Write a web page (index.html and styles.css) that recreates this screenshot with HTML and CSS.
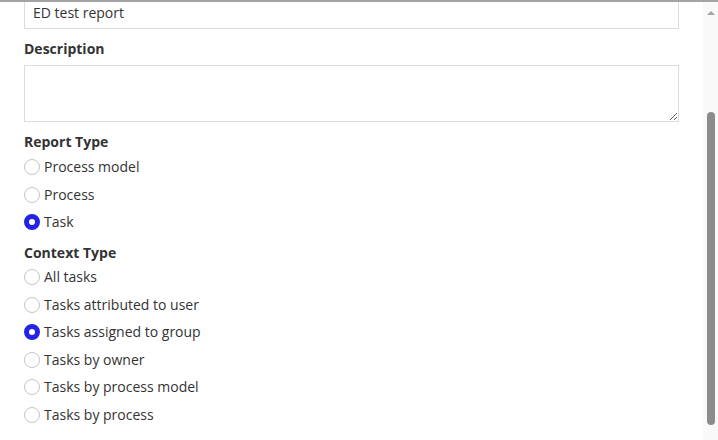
FILE: index.html
```html
<!DOCTYPE html>
<html lang="en">
<head>
<meta charset="utf-8">
<title>Report settings</title>
<link rel="stylesheet" href="styles.css">
</head>
<body>
<div class="frame">
  <div class="pane">
    <form class="form">
      <input class="text-input" type="text" value="ED test report">

      <label class="field-label">Description</label>
      <textarea class="text-area"></textarea>

      <div class="field-label gap-top">Report Type</div>
      <div class="radio-group">
        <label class="radio-row"><input type="radio" name="report"><span>Process model</span></label>
        <label class="radio-row"><input type="radio" name="report"><span>Process</span></label>
        <label class="radio-row"><input type="radio" name="report" checked><span>Task</span></label>
      </div>

      <div class="field-label gap-top-lg">Context Type</div>
      <div class="radio-group">
        <label class="radio-row"><input type="radio" name="context"><span>All tasks</span></label>
        <label class="radio-row"><input type="radio" name="context"><span>Tasks attributed to user</span></label>
        <label class="radio-row"><input type="radio" name="context" checked><span>Tasks assigned to group</span></label>
        <label class="radio-row"><input type="radio" name="context"><span>Tasks by owner</span></label>
        <label class="radio-row"><input type="radio" name="context"><span>Tasks by process model</span></label>
        <label class="radio-row"><input type="radio" name="context"><span>Tasks by process</span></label>
      </div>
    </form>
  </div>
  <div class="scrollbar">
    <div class="scroll-arrow"></div>
    <div class="scroll-thumb"></div>
  </div>
</div>
</body>
</html>
```
FILE: styles.css
```css
html, body {
  margin: 0;
  padding: 0;
  background: #ffffff;
}

body {
  font-family: "Open Sans", "Noto Sans", sans-serif;
  font-size: 14px;
  color: #333333;
  overflow: hidden;
}

.frame {
  display: flex;
  width: 718px;
  height: 440px;
  border-top: 2px solid #a3a3a3;
  box-sizing: border-box;
  overflow: hidden;
}

.pane {
  flex: 1;
  overflow: hidden;
}

.form {
  display: flex;
  flex-direction: column;
  padding: 0 24px 0 24px;
  margin-top: -7px;
}

.text-input {
  height: 34px;
  box-sizing: border-box;
  border: 1px solid #dcdcdc;
  padding: 0 8px;
  font: inherit;
  color: #333333;
  outline: none;
}

.field-label {
  font-weight: 700;
  line-height: 20px;
  margin-top: 10px;
  margin-bottom: 6px;
}

.gap-top { margin-top: 10px; margin-bottom: 5px; }
.gap-top-lg { margin-top: 11px; margin-bottom: 4px; }

.text-area {
  height: 57px;
  box-sizing: border-box;
  border: 1px solid #dcdcdc;
  font: inherit;
  resize: vertical;
  outline: none;
  margin: 0;
}

.radio-group {
  display: flex;
  flex-direction: column;
  gap: 7.5px;
}

.radio-row {
  display: flex;
  align-items: center;
  height: 20px;
  line-height: 20px;
  gap: 4px;
}

.radio-row input {
  appearance: none;
  -webkit-appearance: none;
  width: 16px;
  height: 16px;
  margin: 0;
  border: 1px solid #c4c4c4;
  border-radius: 50%;
  box-sizing: border-box;
  background: #ffffff;
  flex: none;
}

.radio-row input:checked {
  border: 5px solid #2323e8;
  background: #ffffff;
}

.scrollbar {
  width: 15px;
  flex: none;
  background: #f9f9f9;
  display: flex;
  flex-direction: column;
  align-items: center;
}

.scroll-arrow {
  width: 0;
  height: 0;
  margin-top: 9px;
  border-left: 4px solid transparent;
  border-right: 4px solid transparent;
  border-bottom: 4px solid #a3a3a3;
}

.scroll-thumb {
  width: 8px;
  height: 313px;
  margin-top: 97px;
  border-radius: 4px;
  background: #8c8c8c;
}
```
